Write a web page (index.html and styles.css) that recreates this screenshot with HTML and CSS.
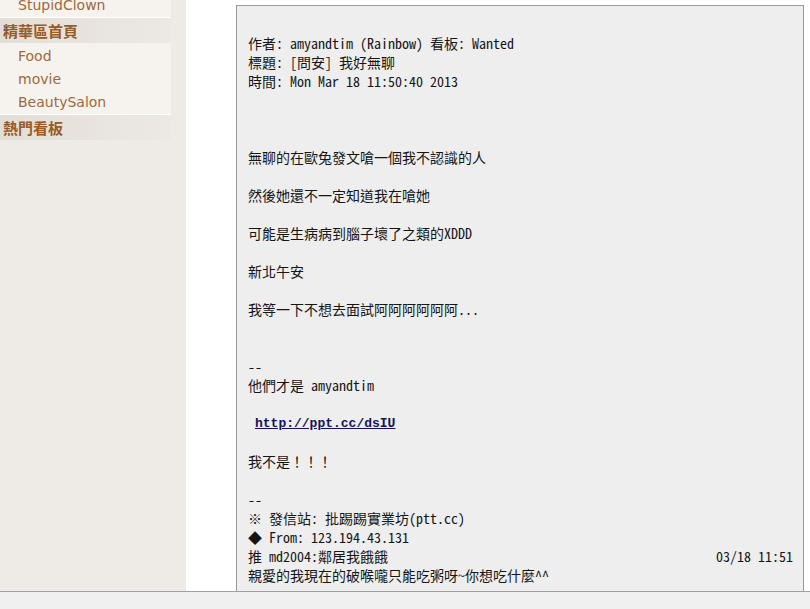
FILE: index.html
```html
<!DOCTYPE html>
<html lang="zh-Hant">
<head>
  <meta charset="UTF-8" />
  <meta name="viewport" content="width=device-width, initial-scale=1.0"/>
  <title>[問安] 我好無聊 - Wanted</title>
  <link rel="stylesheet" href="styles.css">
</head>
<body>
  <aside class="sidebar">
    <div class="menu">
      <ul class="menu-list">
        <li><a href="#">StupidClown</a></li>
      </ul>
      <div class="menu-title">精華區首頁</div>
      <ul class="menu-list">
        <li><a href="#">Food</a></li>
        <li><a href="#">movie</a></li>
        <li><a href="#">BeautySalon</a></li>
      </ul>
      <div class="menu-title">熱門看板</div>
    </div>
  </aside>

  <main class="content">
    <div class="post">
<pre class="post-text">作者: amyandtim (Rainbow) 看板: Wanted
標題: [問安] 我好無聊
時間: Mon Mar 18 11:50:40 2013



無聊的在歐兔發文嗆一個我不認識的人

然後她還不一定知道我在嗆她

可能是生病病到腦子壞了之類的XDDD

新北午安

我等一下不想去面試阿阿阿阿阿阿...


--
他們才是 amyandtim

 <a class="post-link" href="#">http://ppt.cc/dsIU</a>

我不是！！！

--
※ 發信站: 批踢踢實業坊(ptt.cc)
◆ From: 123.194.43.131</pre>
      <div class="push">
        <span>推 md2004:鄰居我餓餓</span>
        <span>03/18 11:51</span>
      </div>
      <div class="push-text">親愛的我現在的破喉嚨只能吃粥呀~你想吃什麼^^</div>
    </div>
  </main>

  <div class="statusbar"></div>
</body>
</html>
```

FILE: styles.css
```css
:root {
  --side-bg: #eeebe6;
  --menu-bg: #f6f3ef;
  --title: #985a28;
  --link: #9c6a3c;
  --post-bg: #eeeeee;
  --post-border: #9a9a9a;
  --text: #151515;
}

body {
  margin: 0;
  padding: 0;
  display: flex;
  min-height: 100vh;
  background: #ffffff;
  overflow: hidden;
}

.sidebar {
  width: 186px;
  flex-shrink: 0;
  background-color: var(--side-bg);
}

.menu {
  width: 171px;
  margin-top: -8px;
  font-family: "DejaVu Sans", "Noto Sans CJK TC", sans-serif;
}

.menu-list {
  list-style: none;
  margin: 0;
  padding: 2px 0 0;
  background-color: var(--menu-bg);
  border-bottom: 1px solid #ffffff;
}

.menu-list li {
  height: 23px;
  line-height: 23px;
  padding-left: 18px;
  font-size: 14px;
}

.menu-list a {
  color: var(--link);
  text-decoration: none;
}

.menu-title {
  height: 25px;
  line-height: 25px;
  padding-left: 3px;
  font-family: "Noto Sans CJK TC", sans-serif;
  font-size: 15px;
  font-weight: bold;
  color: var(--title);
  background: linear-gradient(to right, #e3ded5, #ece9e4);
}

.content {
  flex: 1;
  padding: 5px 6px 0 50px;
}

.post {
  background-color: var(--post-bg);
  border: 1px solid var(--post-border);
  padding: 28px 10px 30px 11px;
  color: var(--text);
  font-family: "Noto Sans Mono CJK TC", "Liberation Mono", "Noto Sans CJK TC", monospace;
  font-size: 14px;
  line-height: 19px;
}

.post-text {
  margin: 0;
  font-family: inherit;
  font-size: inherit;
  line-height: inherit;
}

.post-link {
  font-family: "Liberation Mono", monospace;
  font-size: 13px;
  line-height: 19px;
  vertical-align: top;
  font-weight: bold;
  color: #14145a;
}

.push {
  display: flex;
  justify-content: space-between;
}

.statusbar {
  position: fixed;
  left: 0;
  right: 0;
  bottom: 0;
  height: 17px;
  background-color: #f0f0f0;
  border-top: 1px solid #a0a0a0;
}
```
